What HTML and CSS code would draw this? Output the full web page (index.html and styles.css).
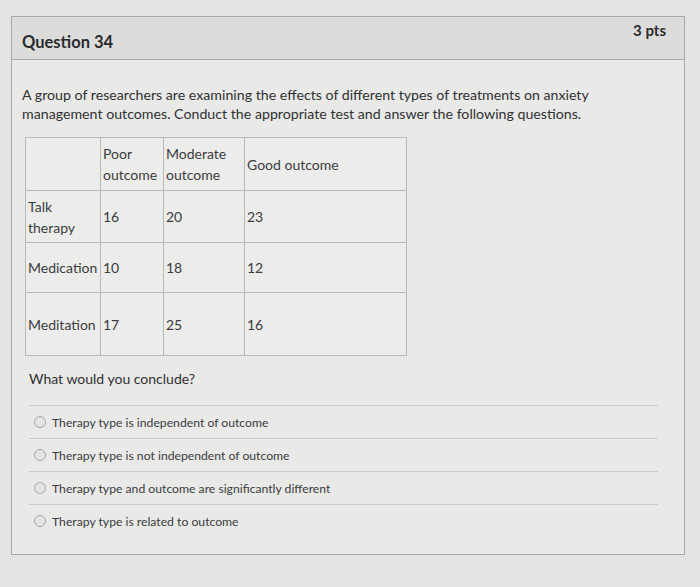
FILE: index.html
```html
<!DOCTYPE html>
<html>
<head>
<meta charset="utf-8">
<link rel="stylesheet" href="styles.css">
</head>
<body>
<div class="card">
  <div class="header">
    <div class="title">Question 34</div>
    <div class="pts">3 pts</div>
  </div>
  <div class="content">
    <p class="intro">A group of researchers are examining the effects of different types of treatments on anxiety management outcomes. Conduct the appropriate test and answer the following questions.</p>
    <table class="data">
      <colgroup>
        <col class="c1"><col class="c2"><col class="c3"><col class="c4">
      </colgroup>
      <tr class="r0">
        <td></td>
        <td>Poor outcome</td>
        <td>Moderate outcome</td>
        <td>Good outcome</td>
      </tr>
      <tr class="r1">
        <td>Talk therapy</td>
        <td>16</td>
        <td>20</td>
        <td>23</td>
      </tr>
      <tr class="r2">
        <td>Medication</td>
        <td>10</td>
        <td>18</td>
        <td>12</td>
      </tr>
      <tr class="r3">
        <td>Meditation</td>
        <td>17</td>
        <td>25</td>
        <td>16</td>
      </tr>
    </table>
    <p class="ask">What would you conclude?</p>
    <div class="answers">
      <label class="answer"><span class="radio"></span><span>Therapy type is independent of outcome</span></label>
      <label class="answer"><span class="radio"></span><span>Therapy type is not independent of outcome</span></label>
      <label class="answer"><span class="radio"></span><span>Therapy type and outcome are significantly different</span></label>
      <label class="answer"><span class="radio"></span><span>Therapy type is related to outcome</span></label>
    </div>
  </div>
</div>
</body>
</html>
```
FILE: styles.css
```css
html, body {
  margin: 0;
  padding: 0;
}
body {
  background: #e3e3e1;
  font-family: Lato, "Open Sans", sans-serif;
  color: #2f3133;
  width: 700px;
  height: 587px;
  overflow: hidden;
}
.card {
  margin: 16px 15px 0 11px;
  border: 1px solid #a9a9a7;
  background: #e9e9e7;
  height: 539px;
  box-sizing: border-box;
}
.header {
  height: 42px;
  background: #dcdcda;
  border-bottom: 1px solid #a9a9a7;
  display: flex;
  justify-content: space-between;
  align-items: flex-start;
  padding: 0 18px 0 10px;
}
.title {
  font-size: 16.5px;
  font-weight: 700;
  margin-top: 15px;
  color: #2a2c2e;
}
.pts {
  font-size: 15px;
  font-weight: 700;
  margin-top: 4px;
  color: #2a2c2e;
}
.content {
  padding: 25px 18px 0 10px;
}
.intro {
  margin: 0;
  font-size: 14.2px;
  line-height: 19px;
  width: 580px;
}
.data {
  margin: 14px 0 0 3px;
  border-collapse: collapse;
  font-size: 14px;
  line-height: 21px;
  background: #ececea;
  table-layout: fixed;
  width: 381px;
}
.data td {
  border: 1.5px solid #b9b9b7;
  vertical-align: middle;
  padding: 0 2px;
  color: #3a3c3e;
}
.c1 { width: 75px; }
.c2 { width: 63px; }
.c3 { width: 81px; }
.c4 { width: 162px; }
.r0 { height: 53px; }
.r1 { height: 52px; }
.r2 { height: 50px; }
.r3 { height: 63px; }
.ask {
  margin: 13px 0 0 7px;
  font-size: 14px;
  line-height: 20px;
}
.answers {
  margin: 16px 8px 0 7px;
  display: flex;
  flex-direction: column;
}
.answer {
  display: flex;
  align-items: center;
  gap: 6px;
  height: 32px;
  border-top: 1px solid #cacac8;
  padding-left: 5px;
  font-size: 12.2px;
  color: #3a3c3e;
}
.radio {
  width: 10px;
  height: 10px;
  border-radius: 50%;
  border: 1px solid #a6a6a4;
  background: #e4e4e2;
  flex: none;
}
```
